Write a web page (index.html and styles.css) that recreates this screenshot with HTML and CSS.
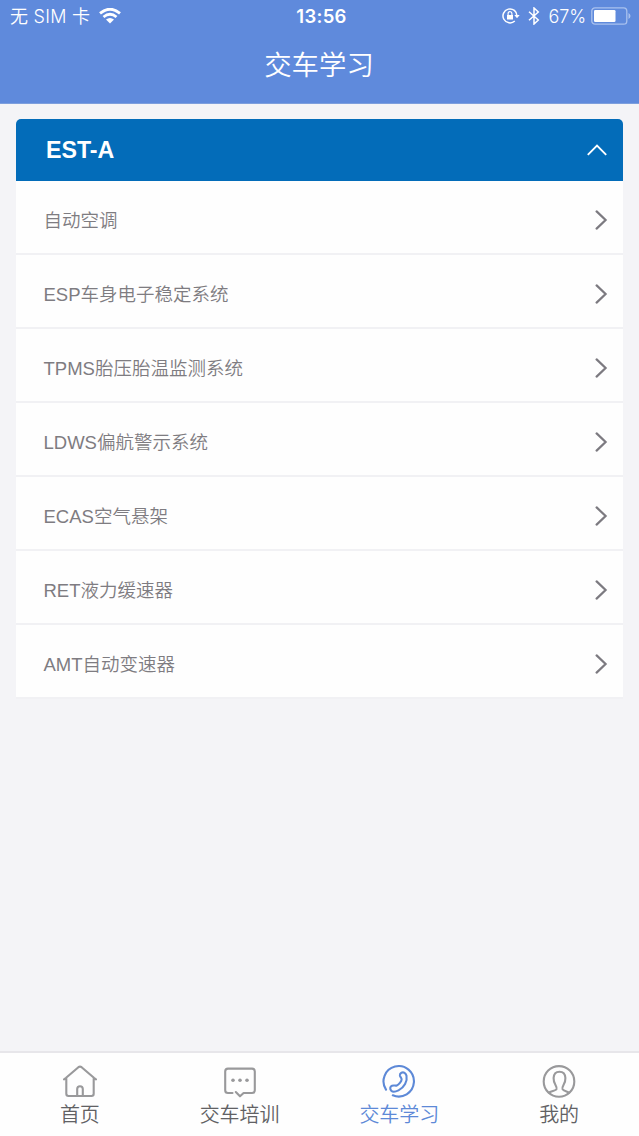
FILE: index.html
```html
<!DOCTYPE html>
<html lang="zh-CN">
<head>
<meta charset="utf-8">
<title>交车学习</title>
<link rel="stylesheet" href="styles.css">
</head>
<body>
<div class="app">
  <header class="top">
    <div class="status">
      <div class="status-left">
        <span>无 SIM 卡</span>
        <svg class="wifi" width="22" height="16" viewBox="0 0 22 16" fill="none" stroke="#fff" stroke-width="2.8"><path d="M1 5.4Q11-3 21 5.4M4.5 9Q11 3.6 17.5 9"/><path d="M11 15.5 7 11.5Q11 8.3 15 11.5Z" fill="#fff" stroke="none"/></svg>
      </div>
      <span class="clock">13:56</span>
      <div class="status-right">
        <svg width="18" height="16" viewBox="0 0 18 16" fill="none" stroke="#fff" stroke-width="1.5"><path d="M12.8 13A7 7 0 1 1 15 8"/><path d="M12.3 7h5.4L15 10.3Z" fill="#fff" stroke="none"/><path d="M5 7h6v4.5H5Z" fill="#fff" stroke="none"/><path d="M6.1 7.2V5.6a1.9 1.9 0 0 1 3.8 0v1.6" stroke-width="1.2"/></svg>
        <svg class="bluetooth" width="12" height="18" viewBox="0 0 12 18" fill="none" stroke="#fff" stroke-width="1.5"><path d="M1 4.8 10.3 13 6 17V1l4.3 4L1 13.2"/></svg>
        <span class="percent">67%</span>
        <svg class="battery" width="40" height="18" viewBox="0 0 40 18"><rect x=".8" y=".8" width="35" height="16.4" rx="3.2" fill="none" stroke="#a9c1ee" stroke-width="1.3"/><rect x="3" y="3" width="21.5" height="12" rx="1.3" fill="#fff"/><path d="M37.5 6q2 1 2 3t-2 3Z" fill="#a9c1ee"/></svg>
      </div>
    </div>
    <h1 class="title">交车学习</h1>
  </header>
  <main class="content">
    <section class="panel">
      <div class="panel-head">
        <span>EST-A</span>
        <svg width="20" height="12" viewBox="0 0 20 12" fill="none" stroke="#fff" stroke-width="1.9"><path d="M.8 10.8 10 1.6l9.2 9.2"/></svg>
      </div>
      <ul class="list">
        <li class="row"><span>自动空调</span><svg class="arrow" viewBox="0 0 13 20"><path d="m1.6 1.4 9 8.6-9 8.6"/></svg></li>
        <li class="row"><span>ESP车身电子稳定系统</span><svg class="arrow" viewBox="0 0 13 20"><path d="m1.6 1.4 9 8.6-9 8.6"/></svg></li>
        <li class="row"><span>TPMS胎压胎温监测系统</span><svg class="arrow" viewBox="0 0 13 20"><path d="m1.6 1.4 9 8.6-9 8.6"/></svg></li>
        <li class="row"><span>LDWS偏航警示系统</span><svg class="arrow" viewBox="0 0 13 20"><path d="m1.6 1.4 9 8.6-9 8.6"/></svg></li>
        <li class="row"><span>ECAS空气悬架</span><svg class="arrow" viewBox="0 0 13 20"><path d="m1.6 1.4 9 8.6-9 8.6"/></svg></li>
        <li class="row"><span>RET液力缓速器</span><svg class="arrow" viewBox="0 0 13 20"><path d="m1.6 1.4 9 8.6-9 8.6"/></svg></li>
        <li class="row"><span>AMT自动变速器</span><svg class="arrow" viewBox="0 0 13 20"><path d="m1.6 1.4 9 8.6-9 8.6"/></svg></li>
      </ul>
    </section>
  </main>
  <nav class="tabs">
    <div class="tab">
      <svg class="tab-icon" viewBox="0 0 36 34"><path d="M2 14.3 3.8 13 16.4 2.2q1.6-1.2 3.2 0L32.2 13l1.8 1.3M4.3 13v15.8q0 2.2 2.2 2.2h23q2.2 0 2.2-2.2V13M15.2 31v-7q0-2.8 2.8-2.8t2.8 2.8v7"/></svg>
      <span>首页</span>
    </div>
    <div class="tab">
      <svg class="tab-icon" viewBox="0 0 36 34"><path d="M10.5 28H6q-2.8 0-2.8-2.8V6.4q0-2.8 2.8-2.8h24q2.8 0 2.8 2.8v18.8q0 2.8-2.8 2.8h-8.4L18 31.3 13.8 27"/><g fill="currentColor" stroke="none"><circle cx="11" cy="15.2" r="1.8"/><circle cx="18" cy="15.2" r="1.8"/><circle cx="25" cy="15.2" r="1.8"/></g></svg>
      <span>交车培训</span>
    </div>
    <div class="tab active">
      <svg class="tab-icon" viewBox="0 0 36 34"><path d="M5 24.6A15.2 15.2 0 1 1 11.8 30.3"/><path d="M20.4 7.7c2.2-1 4.5.3 5.1 3.1 1.1 5.3-2.2 11.7-8 14.6-2.4 1.2-5.6 2-7.2.4-1.7-1.8-1.3-4.2.6-5 1.9-.9 3.5.2 4.9-.3 2-.8 4.7-4 4.8-6 .1-1.6-1.5-2.3-1.7-4.1-.1-1.2.4-2.2 1.5-2.7Z"/></svg>
      <span>交车学习</span>
    </div>
    <div class="tab">
      <svg class="tab-icon" viewBox="0 0 36 34"><circle cx="18" cy="16.4" r="15.3"/><path d="M7.7 27.6c2.5-1.3 7.1-2 7.8-3.5.6-1.4-.2-2.7-1-4.1-1.4-2.2-2-4.4-1.9-7 .2-4 2.2-6.3 5.9-6.3s5.7 2.3 5.9 6.3c.1 2.6-.5 4.8-1.9 7-.8 1.4-1.6 2.7-1 4.1.7 1.5 4.3 2.2 6.8 3.5"/></svg>
      <span>我的</span>
    </div>
  </nav>
</div>
</body>
</html>
```
FILE: styles.css
```css
* { box-sizing: border-box; }
body {
  margin: 0;
  font-family: "Liberation Sans", "Noto Sans CJK SC", sans-serif;
  background: #f4f4f7;
}
svg { display: block; flex: none; }
.app { height: 1136px; display: flex; flex-direction: column; }
.top { height: 104px; background: #5f8adc; color: #fff; border-bottom: 1px solid #7d9fdd; }
.status {
  height: 33px;
  padding: 1px 8px 0 10px;
  display: grid;
  grid-template-columns: 1fr auto 1fr;
  align-items: center;
  font-family: Inter, "Noto Sans CJK SC", sans-serif;
  font-size: 18px;
  line-height: 32px;
  font-weight: 350;
}
.status-left, .status-right { display: flex; align-items: center; white-space: nowrap; }
.status-left { gap: 9px; letter-spacing: .25px; }
.wifi { margin-top: -2px; }
.status-right { justify-content: flex-end; }
.status-right svg { margin-top: -2px; }
.status-right .bluetooth { margin-left: 8px; }
.percent { margin-left: 9px; letter-spacing: -.1px; }
.status-right .battery { margin-left: 5px; }
.clock { font-size: 18.5px; font-weight: 600; letter-spacing: .3px; padding-left: 2px; line-height: 30px; margin-top: -2px; }
.title { margin: 0; text-align: center; font-size: 27.4px; font-weight: 350; line-height: 66px; text-indent: -1px; }
.content { flex: 1; padding: 15px 16px 0; }
.panel-head {
  height: 62px;
  padding: 0 16px 0 30px;
  display: flex;
  align-items: center;
  justify-content: space-between;
  border-radius: 5px 5px 0 0;
  background: #036cb9;
  color: #fff;
  font-size: 23.2px;
  font-weight: 700;
}
.list { margin: 0; padding: 0; list-style: none; }
.row {
  height: 74px;
  padding: 6px 15px 0 27.5px;
  display: flex;
  align-items: center;
  justify-content: space-between;
  background: #fefefe;
  border-bottom: 2px solid #f1f1f4;
  color: #7e7c81;
  font-size: 18.5px;
  line-height: 28px;
  font-weight: 350;
}
.row span { padding-top: 2px; }
.arrow { width: 13px; height: 20px; fill: none; stroke: #7c7a80; stroke-width: 2.2; stroke-linecap: round; }
.tabs {
  height: 85px;
  display: grid;
  grid-template-columns: repeat(4, 1fr);
  background: #fefefe;
  border-top: 2px solid #e7e6ea;
}
.tab {
  padding-top: 12px;
  display: flex;
  flex-direction: column;
  align-items: center;
  color: #616164;
  font-size: 20px;
  line-height: 33px;
  font-weight: 350;
}
.tab-icon { width: 36px; height: 34px; color: #99999b; fill: none; stroke: currentColor; stroke-width: 2.1; stroke-linecap: round; stroke-linejoin: round; }
.active, .active .tab-icon { color: #5d89d7; }
```
